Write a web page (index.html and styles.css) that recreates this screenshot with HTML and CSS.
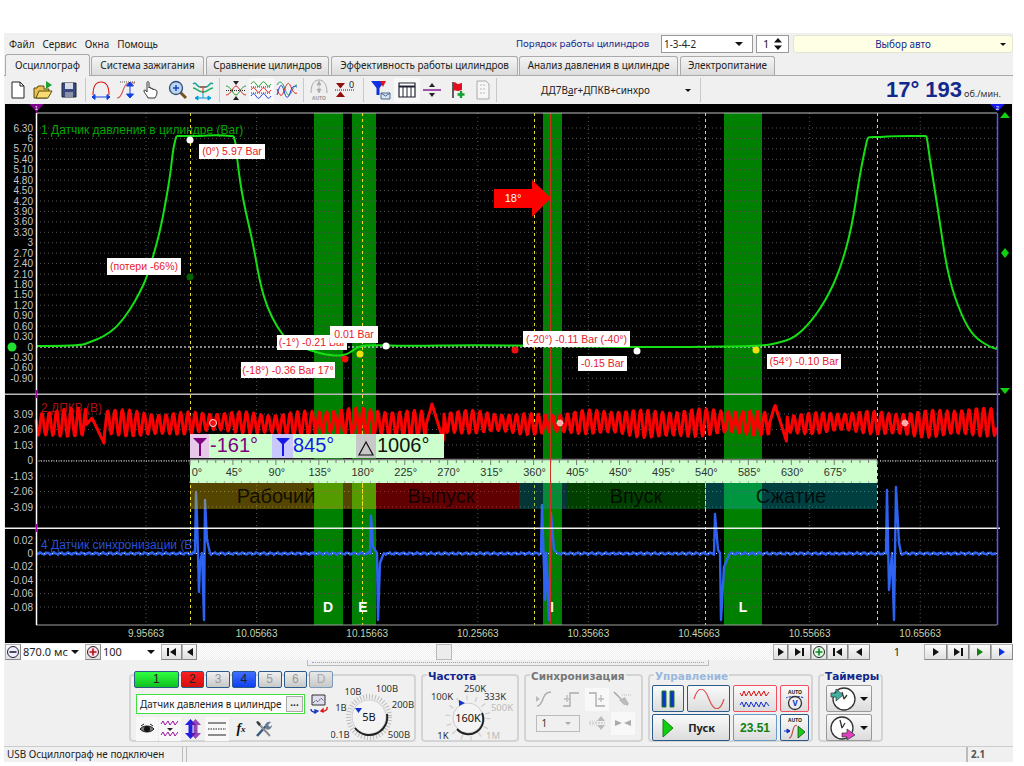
FILE: index.html
```html
<!DOCTYPE html>
<html>

<head>
  <meta charset="utf-8">
  <title>USB Осциллограф</title>
  <link rel="stylesheet" href="styles.css">
</head>

<body>
  <div class="app">
    <div class="menubar">
      <div class="menus"><span class="menu">Файл</span><span class="menu">Сервис</span><span class="menu">Окна</span><span class="menu">Помощь</span></div>
      <span class="order-label">Порядок работы цилиндров</span>
      <div class="combo order-combo"><span>1-3-4-2</span><i class="arrow"></i></div>
      <div class="combo spin"><span>1</span><svg width="10" height="14" viewBox="0 0 10 14"><path d="M5 1l4 4.500H1zM5 13l4-4.500H1z" fill="#111"/></svg></div>
      <div class="combo auto-combo"><span>Выбор авто</span><i class="arrow small"></i></div>
    </div>

    <div class="tabs">
      <div class="tab active">Осциллограф</div>
      <div class="tab t2">Система зажигания</div>
      <div class="tab t3">Сравнение цилиндров</div>
      <div class="tab t4">Эффективность работы цилиндров</div>
      <div class="tab t5">Анализ давления в цилиндре</div>
      <div class="tab t6">Электропитание</div>
    </div>

    <div class="toolbar">
      <span class="tool"><svg width="20" height="20" viewBox="0 0 20 20"><path d="M4 2h8l4 4v12H4z" fill="#fff" stroke="#222"/><path d="M12 2v4h4" fill="none" stroke="#222"/></svg></span>
      <span class="tool"><svg width="20" height="20" viewBox="0 0 20 20"><path d="M1 18V8h3l1-2h6v3h5l-2 9z" fill="#e8c050" stroke="#5a4a10"/><path d="M3 18l3-7h13l-4 7z" fill="#f6dc70" stroke="#5a4a10"/><path d="M13 1l6 4-6 4z" fill="#20a030"/></svg></span>
      <span class="tool"><svg width="20" height="20" viewBox="0 0 20 20"><path d="M3 3h14v14H3z" fill="#3a4a80" stroke="#223"/><path d="M6 3h8v6H6z" fill="#d8dce8"/><path d="M6 12h8v5H6z" fill="#8a90a8"/></svg></span>
      <i class="sep"></i>
      <span class="tool"><svg width="22" height="22" viewBox="0 0 22 22"><path d="M3 16C3 4 8 3 11 3s8 1 8 13" fill="none" stroke="#e01010" stroke-width="1.100"/><path d="M2 18h18M2 18l3-2.500v5zM20 18l-3-2.500v5z" fill="#1040e0" stroke="#1040e0"/></svg></span>
      <span class="tool"><svg width="22" height="22" viewBox="0 0 22 22"><path d="M1 19c7 0 5-15 12-15h6" fill="none" stroke="#e05050" stroke-width="1.100"/><path d="M4 3h16" stroke="#555" stroke-dasharray="1 1"/><path d="M14 4v14M14 3l-3.500 4h7zM14 19l-3.500-4h7z" fill="#1040e0" stroke="#1040e0"/></svg></span>
      <span class="tool"><svg width="20" height="20" viewBox="0 0 20 20"><path d="M6 18c-1-3-4-5-4-7s2-1 3 1V3c0-2 2-2 2 0v5c0-1 2-1 2 0v1c0-1 2-1 2 0v1c0-1 2-1 2 0 1 0 2 0 2 2 0 3-1 4-2 6z" fill="#fff" stroke="#222" stroke-width=".9"/></svg></span>
      <span class="tool"><svg width="20" height="20" viewBox="0 0 20 20"><path d="M11 11l7 7" stroke="#7a5020" stroke-width="3"/><circle cx="8" cy="8" r="6.500" fill="#bcd4f0" stroke="#30507a" stroke-width="1.300"/><path d="M5 8h6M8 5v6" stroke="#1040c0" stroke-width="1.400"/></svg></span>
      <span class="tool"><svg width="22" height="22" viewBox="0 0 22 22"><path d="M1 5c3-3 4 3 7 3h6c3 0 4-6 7-3" fill="none" stroke="#10a890" stroke-width="1.500"/><path d="M1 9c4 0 5 4 10 4s6-4 10-4" fill="none" stroke="#20b060" stroke-width="1.500"/><path d="M8 8h6M11 9v5" stroke="#e02020"/><path d="M3 19h16M3 19l3-2v4zM19 19l-3-2v4zM11 14v5" fill="#00a0e0" stroke="#00a0e0"/></svg></span>
      <i class="sep"></i>
      <span class="tool"><svg width="22" height="22" viewBox="0 0 22 22"><path d="M1 7c5 0 7 9 10 9s5-9 10-9" fill="none" stroke="#20a030"/><path d="M1 16c5 0 7-9 10-9s5 9 10 9" fill="none" stroke="#e02020"/><path d="M1 11.500h20" stroke="#222" stroke-dasharray="1 1"/><path d="M11 6L8 2h6zM11 17l-3 4h6z" fill="#222"/></svg></span>
      <span class="tool pressed"><svg width="22" height="22" viewBox="0 0 22 22"><path d="M1 5c2-3 3-3 5 0s3 3 5 0 3-3 5 0 3 3 5 0" fill="none" stroke="#20a030"/><path d="M1 11c2-3 3-3 5 0s3 3 5 0 3-3 5 0 3 3 5 0" fill="none" stroke="#e02020"/><path d="M1 17c2-3 3-3 5 0s3 3 5 0 3-3 5 0 3 3 5 0" fill="none" stroke="#2040e0"/><path d="M1 8h20M1 14h20" stroke="#333" stroke-dasharray="1 1"/></svg></span>
      <span class="tool"><svg width="22" height="22" viewBox="0 0 22 22"><path d="M1 6c3-6 6-2 8 4s4 8 6 4 3-8 6-8" fill="none" stroke="#20a060"/><path d="M1 10c3 8 5 8 7 2s4-10 6-6 4 10 7 8" fill="none" stroke="#e02020"/><path d="M1 16c3-12 5-12 7-4s4 8 6 2 3-8 7-6" fill="none" stroke="#2040e0"/></svg></span>
      <i class="sep"></i>
      <span class="tool"><svg width="22" height="24" viewBox="0 0 22 24"><path d="M3 15C3 5 7 2 11 2s8 3 8 13" fill="#eee" stroke="#aaa"/><path d="M11 4v11M11 3L9 7h4zM11 15l-2-4h4z" fill="#aaa" stroke="#aaa" stroke-width=".6"/><text x="11" y="21.500" class="ico-auto">AUTO</text></svg></span>
      <span class="tool"><svg width="24" height="22" viewBox="0 0 24 22"><path d="M3 4h9L7.500 9.500zM3 18h9l-4.500-5.500z" fill="#901010"/><path d="M2 11h20" stroke="#222" stroke-dasharray="1 1"/><text x="16" y="9" class="ico-zero">0</text></svg></span>
      <i class="sep wide"></i>
      <span class="tool"><svg width="22" height="22" viewBox="0 0 22 22"><path d="M1 2h14L9.500 9v7h-3V9z" fill="#1030e0"/><path d="M10 2h6l-3 6z" fill="#e01020"/><path d="M11 14h9v6h-9z" fill="#d8e4f4" stroke="#4a6a90"/><path d="M11 14l4.500 3 4.500-3" fill="none" stroke="#4a6a90"/></svg></span>
      <span class="tool pressed"><svg width="20" height="20" viewBox="0 0 20 20"><path d="M2 3h16v14H2z" fill="#fff" stroke="#223" stroke-width="1.200"/><path d="M2 6.500h16" stroke="#223" stroke-width="2"/><path d="M6 6v11M10 6v11M14 6v11" stroke="#223"/></svg></span>
      <span class="tool"><svg width="22" height="20" viewBox="0 0 22 20"><path d="M2 10h18" stroke="#802090" stroke-width="1.500"/><path d="M11 3l3 4H8zM11 17l3-4H8z" fill="#222"/></svg></span>
      <span class="tool"><svg width="20" height="20" viewBox="0 0 20 20"><path d="M5 2v16" stroke="#222" stroke-width="1.400"/><path d="M5 3c3-2 3 1 5 1s2-1 4-1v7c-2 0-2 1-4 1s-2-1-5 0z" fill="#e01020"/><path d="M13 11v7M9.500 14.500h7" stroke="#10a030" stroke-width="2.400"/></svg></span>
      <span class="tool"><svg width="20" height="20" viewBox="0 0 20 20"><path d="M4 1h9l3 3v15H4z" fill="#f6f6f6" stroke="#aaa"/><path d="M7 5h6M7 9h6M7 13h6" stroke="#bbb" stroke-dasharray="2 1"/></svg></span>
      <i class="sep last"></i>
      <div class="preset"><span>ДД7B<u>a</u>r+ДПКВ+синхро</span><i class="arrow small"></i></div>
      <i class="sep last"></i>
      <div class="rpm"><b>17° 193</b><small>об./мин.</small></div>
    </div>

    <svg id="scope" class="scope" width="1007" height="539" viewBox="5 104 1007 539"></svg>

    <div class="scrollrow">
      <span class="navbtn round"><svg width="14" height="14" viewBox="0 0 14 14"><circle cx="7" cy="7" r="5.500" fill="#eef" stroke="#223"/><path d="M3.500 7h7" stroke="#223" stroke-width="1.600"/></svg></span>
      <div class="mini-combo w63"><span>870.0 мс</span><i class="arrow"></i></div>
      <span class="navbtn round"><svg width="14" height="14" viewBox="0 0 14 14"><circle cx="7" cy="7" r="5.500" fill="#fde" stroke="#222"/><path d="M3.500 7h7M7 3.500v7" stroke="#b01010" stroke-width="1.600"/></svg></span>
      <div class="mini-combo w58"><span>100</span><i class="arrow"></i></div>
      <span class="navbtn w21"><i class="bar"></i><i class="tri-l"></i></span>
      <span class="navbtn w15"><i class="tri-l"></i></span>
      <div class="track"><i class="thumb"></i></div>
      <span class="navbtn w15"><i class="tri-r"></i></span>
      <span class="navbtn w23"><i class="tri-r"></i><i class="bar"></i></span>
      <span class="navbtn round"><svg width="14" height="14" viewBox="0 0 14 14"><circle cx="7" cy="7" r="5.500" fill="#dfd" stroke="#222"/><path d="M3.500 7h7M7 3.500v7" stroke="#108030" stroke-width="1.600"/></svg></span>
      <span class="navbtn w21"><i class="bar"></i><i class="tri-l"></i></span>
      <span class="navbtn w22"><i class="tri-l"></i></span>
      <span class="pagenum">1</span>
      <span class="navbtn w23"><i class="tri-r"></i></span>
      <span class="navbtn w22"><i class="tri-r"></i><i class="bar"></i></span>
      <span class="navbtn w22"><i class="tri-r green"></i></span>
      <span class="navbtn w22"><i class="tri-r blue"></i></span>
    </div>

    <div class="slider"><i class="slider-dots"></i></div>

    <div class="panels">
      <div class="channels">
        <div class="ch-left">
          <div class="ch-buttons">
            <span class="ch w45 on-green">1</span><span class="ch on-red">2</span><span class="ch off">3</span><span class="ch on-blue">4</span><span class="ch off">5</span><span class="ch off">6</span><span class="ch off-d">D</span>
          </div>
          <div class="ch-name">
            <div class="name-box"><span>Датчик давления в цилиндре</span><b class="dots">...</b></div>
            <svg width="20" height="20" viewBox="0 0 20 20"><path d="M3 1h13v10H3z" fill="#dde" stroke="#333"/><path d="M4 9l3-3 2 2 3-4 3 3" fill="none" stroke="#333" stroke-dasharray="1 1"/><path d="M2 15c0 3 4 4 7 2M9 17l-3-1v3z" fill="none" stroke="#1030c0" stroke-width="1.300"/><path d="M18 13c1 3-3 5-6 4M12 17l2-2v3z" fill="none" stroke="#e01010" stroke-width="1.300"/></svg>
          </div>
          <div class="ch-tools">
            <span class="tool pressed w22"><svg width="18" height="14" viewBox="0 0 18 14"><path d="M2 7c3-4 11-4 14 0-3 4-11 4-14 0z" fill="#777" stroke="#222"/><circle cx="9" cy="7" r="3" fill="#111"/><path d="M3 4l3-2M15 4l-3-2" stroke="#222"/></svg></span>
            <span class="tool pressed w22"><svg width="20" height="20" viewBox="0 0 20 20"><path d="M1 5l2-3 2 4 3-4 2 4 3-4 2 4 3-4" fill="none" stroke="#a010a0"/><path d="M7 9h6l-3 3z" fill="#222"/><path d="M1 16l2-3 2 4 3-4 2 4 3-4 2 4 3-4" fill="none" stroke="#a010a0"/></svg></span>
            <span class="tool w22"><svg width="18" height="22" viewBox="0 0 18 22"><path d="M6.500 1L1 7h3.500v8H1l5.500 6 5.500-6H8.500V7H12z" fill="#2020e0"/><path d="M11.500 1L6 7h3.500v8H6l5.500 6 5.500-6h-3.500V7H17z" fill="#7a10a0" opacity=".75"/></svg></span>
            <span class="tool pressed w24"><svg width="20" height="16" viewBox="0 0 20 16"><path d="M1 2h18M1 14h18" stroke="#222"/><path d="M1 8h18" stroke="#222" stroke-dasharray="1.500 1"/></svg></span>
            <span class="tool fx w22">f<sub>x</sub></span>
            <span class="tool w22"><svg width="18" height="18" viewBox="0 0 18 18"><path d="M2 16l9-10" stroke="#3a5a80" stroke-width="2.600"/><path d="M3 3l12 13" stroke="#8a8a90" stroke-width="2"/><path d="M10 6c0-3 3-5 6-4l-3 3 2 2 2-2c0 3-3 6-6 4z" fill="#6a7a90"/><path d="M1 2l2-1 3 3-2 2z" fill="#3a3a3a"/></svg></span>
          </div>
        </div>
        <svg class="knob-svg" width="84" height="66" viewBox="331 676 84 66">
          <circle cx="369" cy="717" r="20.500" class="knob-ticks"/>
          <circle cx="369" cy="717" r="17" class="knob-dial"/>
          <path d="M355 728a18 18 0 0 0 32-14" class="knob-edge"/>
          <path d="M355 708h7l-3.500 5z" fill="#1030d0"/>
          <text x="369" y="721" class="knob-mid">5В</text>
          <text x="353" y="695" class="knob-label">10В</text><text x="387" y="692" class="knob-label">100В</text>
          <text x="341" y="711" class="knob-label">1В</text><text x="403" y="708" class="knob-label">200В</text>
          <text x="340" y="738" class="knob-label">0.1В</text><text x="399" y="738" class="knob-label">500В</text>
        </svg>
      </div>

      <fieldset class="group freq">
        <legend class="navy">Частота</legend>
        <svg width="92" height="62" viewBox="423 680 92 62">
          <circle cx="468" cy="717" r="20" class="knob-ticks wide"/>
          <circle cx="468" cy="717" r="15" class="knob-dial"/>
          <path d="M457 728a15 15 0 0 0 25-16" class="knob-edge"/>
          <path d="M459 699l6 3-6 3z" fill="#1030d0"/>
          <text x="468" y="721" class="knob-mid">160K</text>
          <text x="442" y="699" class="knob-label">100K</text><text x="475" y="691" class="knob-label">250K</text>
          <text x="495" y="699" class="knob-label">333K</text><text x="502" y="710" class="knob-label dim">500K</text>
          <text x="443" y="738" class="knob-label">1K</text><text x="493" y="738" class="knob-label dim">1M</text>
        </svg>
      </fieldset>

      <fieldset class="group sync">
        <legend class="gray">Синхронизация</legend>
        <div class="sync-grid">
          <span class="sicon"><svg width="20" height="20" viewBox="0 0 20 20"><path d="M2 17c7 0 4-14 14-14" fill="none" stroke="#aaa" stroke-width="1.400"/><path d="M1 7l4 3-4 3z" fill="#bbb"/></svg></span>
          <span class="sicon"><svg width="20" height="20" viewBox="0 0 20 20"><path d="M2 17h7V4h9" fill="none" stroke="#aaa" stroke-width="1.300"/><path d="M3 10h6M6 6v7" stroke="#bbb" stroke-width="1.300"/></svg></span>
          <span class="sicon lit"><svg width="20" height="20" viewBox="0 0 20 20"><path d="M2 4h7v13h9" fill="none" stroke="#aaa" stroke-width="1.300"/><path d="M11 10h6M14 6v7" stroke="#bbb" stroke-width="1.300"/></svg></span>
          <span class="sicon"><svg width="20" height="20" viewBox="0 0 20 20"><path d="M1 3l5 5c3 3 5 7 9 8" fill="none" stroke="#aaa" stroke-width="1.600"/><path d="M9 6h10" stroke="#bbb" stroke-dasharray="1 1"/><path d="M6 11l6-3 4 7-5 1z" fill="#bbb"/></svg></span>
          <div class="combo sync-combo"><span>1</span><i class="arrow small dim"></i></div>
          <span class="sicon"><svg width="20" height="20" viewBox="0 0 20 20"><path d="M14 3l4 5h-8zM14 17l4-5h-8z" fill="#bbb"/><path d="M2 10h16" stroke="#bbb" stroke-dasharray="2 1"/><path d="M3 8h7M3 12h7" stroke="#ccc" stroke-dasharray="1 1"/></svg></span>
          <span class="sicon lit"><svg width="20" height="14" viewBox="0 0 20 14"><path d="M2 4l7 3-7 3zM18 4l-7 3 7 3z" fill="#aaa"/></svg></span>
        </div>
      </fieldset>

      <fieldset class="group control">
        <legend class="pale">Управление</legend>
        <div class="control-grid">
          <span class="btn"><svg width="16" height="18" viewBox="0 0 16 18"><path d="M2 1h4v16H2zM10 1h4v16h-4z" fill="#1030d0" stroke="#108020"/></svg></span>
          <span class="btn"><svg width="32" height="20" viewBox="0 0 32 20"><path d="M1 10C5-3 11-3 16 10s11 13 15 0" fill="none" stroke="#e05050" stroke-width="1.200"/></svg></span>
          <span class="btn red"><svg width="34" height="22" viewBox="0 0 34 22"><path d="M2 5l2 3 2-5 2 5 3-5 2 5 3-5 2 5 3-5 2 5 3-5 2 5 3-4" fill="none" stroke="#e01010"/><path d="M2 17l2-3 2 5 2-5 3 5 2-5 3 5 2-5 3 5 2-5 3 5 2-5 3 4" fill="none" stroke="#1030d0"/></svg></span>
          <span class="btn red"><svg width="22" height="24" viewBox="0 0 22 24"><text x="11" y="7" class="ico-auto dark">AUTO</text><path d="M2 11c3-2 15-2 18 0" fill="none" stroke="#1030d0" stroke-dasharray="2 1"/><circle cx="11" cy="16" r="6.500" fill="#eee" stroke="#333" stroke-width="1.300"/><text x="11" y="19" class="ico-v">V</text></svg></span>
          <span class="btn start"><svg width="12" height="20" viewBox="0 0 12 20"><path d="M1 1l10 9-10 9z" fill="#10d010" stroke="#108010"/></svg><b>Пуск</b></span>
          <span class="btn value">23.51</span>
          <span class="btn"><svg width="24" height="24" viewBox="0 0 24 24"><text x="12" y="6" class="ico-auto dark">AUTO</text><path d="M1 15h6M7 15l-3-2v4z" stroke="#1030d0" fill="#1030d0"/><path d="M6 22c5 0 2-13 8-13" fill="none" stroke="#c05050" stroke-width="1.200"/><path d="M15 10l7 6-7 6z" fill="#10d010" stroke="#222" stroke-width=".7"/></svg></span>
        </div>
      </fieldset>

      <fieldset class="group timers">
        <legend class="navy">Таймеры</legend>
        <div class="timer-stack">
          <span class="btn timer"><svg width="26" height="26" viewBox="0 0 26 26"><circle cx="14" cy="13" r="11" fill="#fff" stroke="#333" stroke-width="1.300"/><path d="M14 13L12 6M14 13l3-4" stroke="#333" stroke-width="1.300"/><path d="M1 7h5V3l7 6-7 6v-4H1z" fill="#40b0a0" stroke="#333" stroke-width=".7"/></svg><i class="arrow"></i></span>
          <span class="btn timer"><svg width="26" height="26" viewBox="0 0 26 26"><circle cx="12" cy="13" r="11" fill="#fff" stroke="#333" stroke-width="1.300"/><path d="M12 13L10 5M12 13l3-5" stroke="#333" stroke-width="1.300"/><path d="M12 18h5v-4l8 6-8 5v-3h-5z" fill="#e040c0" stroke="#333" stroke-width=".7"/></svg><i class="arrow"></i></span>
        </div>
      </fieldset>
    </div>

    <div class="statusbar">
      <div class="cell first">USB Осциллограф не подключен</div>
      <div class="cell grow"></div>
      <div class="cell ver">2.1</div>
    </div>
  </div>
  <script src="chart.js"></script>
</body>

</html>
```

FILE: styles.css
```css
body {
  margin: 0;
  background: white;
}

.app {
  margin: 33px 0 0 4px;
  width: 1009px;
  height: 729px;
  background: #f0f0f0;
  font-family: "Noto Sans", sans-serif;
  font-size: 9.900px;
  color: #222;
  overflow: hidden;
}

.menubar {
  height: 21px;
  display: flex;
  align-items: center;
  white-space: nowrap;
}

.menus {
  width: 512px;
  flex: none;
  padding-left: 5px;
  box-sizing: border-box;
}

.menu {
  margin-right: 8px;
}

.order-label {
  color: #12288c;
  width: 145px;
  flex: none;
  font-size: 9.700px;
}

.combo {
  background: white;
  border: 1px solid #999;
  height: 18px;
  box-sizing: border-box;
  display: flex;
  align-items: center;
  position: relative;
  flex: none;
}

.order-combo {
  width: 92px;
  padding-left: 2px;
  justify-content: space-between;
  padding-right: 9px;
}

.spin {
  width: 33px;
  margin-left: 3px;
  padding: 0 5px 0 6px;
  justify-content: space-between;
  font-size: 11px;
}

.auto-combo {
  width: 220px;
  margin-left: 4px;
  background: #ffffe6;
  border-color: #e4e4d0;
  border-radius: 3px;
  justify-content: center;
  color: #12288c;
}

.auto-combo .arrow {
  position: absolute;
  right: 6px;
  top: 7px;
}

.arrow {
  display: inline-block;
  border-left: 4px solid transparent;
  border-right: 4px solid transparent;
  border-top: 4px solid #111;
}

.arrow.small {
  border-left-width: 3px;
  border-right-width: 3px;
  border-top-width: 3px;
}

.arrow.dim {
  border-top-color: #aaa;
}

.tabs {
  height: 22px;
  display: flex;
  align-items: flex-end;
  padding-left: 1px;
  border-bottom: 1px solid #aaa;
  box-sizing: border-box;
}

.tab {
  height: 19px;
  line-height: 17px;
  box-sizing: border-box;
  border: 1px solid #aaa;
  border-bottom: none;
  border-radius: 3px 3px 0 0;
  margin-right: 2px;
  text-align: center;
  background: linear-gradient(#f4f4f4, #dcdcdc);
  white-space: nowrap;
  flex: none;
}

.tab.active {
  height: 22px;
  width: 85px;
  margin-right: 1px;
  background: #f0f0f0;
  margin-bottom: -1px;
  line-height: 20px;
}

.t2 { width: 113px; }
.t3 { width: 123px; }
.t4 { width: 187px; margin-right: 1px; }
.t5 { width: 159px; }
.t6 { width: 95px; }

.toolbar {
  height: 28px;
  display: flex;
  align-items: center;
  padding-left: 1px;
  box-sizing: border-box;
}

.tool {
  width: 25.500px;
  height: 24px;
  display: flex;
  align-items: center;
  justify-content: center;
  flex: none;
}

.tool.pressed {
  background: #f8f8f8;
}

.sep {
  width: 1px;
  height: 24px;
  background: #c8c8c8;
  flex: none;
  margin: 0 3px;
}

.sep.wide {
  margin: 0 5px;
}

.sep.last {
  margin: 0;
}

.ico-auto {
  font-size: 5px;
  text-anchor: middle;
  fill: #999;
  font-weight: bold;
}

.ico-auto.dark {
  fill: #222;
}

.ico-zero {
  font-size: 9px;
  fill: #222;
}

.ico-v {
  font-size: 8px;
  text-anchor: middle;
  fill: #1030d0;
  font-weight: bold;
}

.preset {
  width: 203px;
  display: flex;
  align-items: center;
  justify-content: space-between;
  padding: 0 9px 0 44px;
  box-sizing: border-box;
  flex: none;
}

.rpm {
  flex: 1;
  text-align: right;
  padding-right: 12px;
  color: #12288c;
  white-space: nowrap;
}

.rpm b {
  font-family: "Liberation Sans", sans-serif;
  font-size: 22px;
}

.rpm small {
  font-size: 9px;
  color: #333;
  margin-left: 2px;
}

.scope {
  display: block;
  margin-left: 1px;
  background: black;
  font-family: "Liberation Sans", sans-serif;
}

.tick-y {
  fill: #c8c8c8;
  font-size: 10px;
  text-anchor: end;
}

.tick-x {
  fill: #c4d4b0;
  font-size: 10px;
  text-anchor: middle;
}

.grid {
  stroke: #555;
  stroke-dasharray: 1 3;
}

.trace {
  fill: none;
  stroke-linejoin: round;
}

.tag-text {
  fill: #e8202a;
  font-size: 10.500px;
  text-anchor: middle;
}

.ch-title {
  font-size: 12px;
}

.info-text {
  font-size: 20px;
}

.ruler-text {
  font-size: 11px;
  fill: #333;
  text-anchor: middle;
}

.phase-text {
  font-size: 20px;
  fill: black;
  fill-opacity: .8;
  text-anchor: middle;
}

.band-letter {
  font-size: 14px;
  font-weight: bold;
  fill: white;
  text-anchor: middle;
}

.arrow-text {
  font-size: 11px;
  fill: white;
  text-anchor: middle;
}

.scrollrow {
  height: 17px;
  display: flex;
  align-items: center;
  padding-left: 1px;
  box-sizing: border-box;
  white-space: nowrap;
}

.navbtn {
  height: 16px;
  box-sizing: border-box;
  border: 1px solid #b0b0b0;
  border-right-color: #888;
  border-bottom-color: #888;
  background: linear-gradient(#fafafa, #e0e0e0);
  display: flex;
  align-items: center;
  justify-content: center;
  gap: 1px;
  flex: none;
}

.round { width: 16px; }
.w15 { width: 15px; }
.w21 { width: 21px; }
.w22 { width: 22px; }
.w23 { width: 23px; }
.w24 { width: 24px; }
.w58 { width: 60px; }
.w63 { width: 64px; }

.tri-l, .tri-r {
  border-top: 4px solid transparent;
  border-bottom: 4px solid transparent;
}

.tri-l { border-right: 6px solid #111; }
.tri-r { border-left: 6px solid #111; }
.tri-r.green { border-left-color: #108010; }
.tri-r.blue { border-left-color: #1030e0; }

.bar {
  width: 2px;
  height: 8px;
  background: #111;
}

.mini-combo {
  height: 16px;
  background: white;
  display: flex;
  align-items: center;
  justify-content: space-between;
  padding: 0 6px 0 2px;
  box-sizing: border-box;
  font-size: 11px;
  flex: none;
}

.track {
  flex: 1;
  height: 16px;
  background: repeating-conic-gradient(#fff 0 25%, #eee 0 50%) 0 0 / 2px 2px;
  position: relative;
}

.thumb {
  position: absolute;
  left: 239px;
  top: 0;
  width: 16px;
  height: 16px;
  box-sizing: border-box;
  border: 1px solid #bbb;
  background: #ececec;
}

.pagenum {
  width: 54px;
  text-align: center;
  font-size: 11px;
  flex: none;
  background: #f0f0f0;
}

.slider {
  height: 6px;
  margin-left: 303px;
  width: 402px;
  box-sizing: border-box;
  border: 1px solid #bbb;
  border-top: none;
  display: flex;
  align-items: center;
  padding: 0 4px;
}

.slider-dots {
  flex: 1;
  border-top: 1px dotted #78a8e0;
}

.panels {
  height: 80px;
  display: flex;
  align-items: flex-start;
  gap: 5px;
  padding-left: 125px;
  box-sizing: border-box;
}

.channels {
  width: 287px;
  height: 68px;
  margin-top: 8px;
  box-sizing: border-box;
  border: 2px solid #d4d4d4;
  border-radius: 4px;
  display: flex;
  flex: none;
}

.ch-left {
  width: 202px;
  padding-left: 3px;
  box-sizing: border-box;
  flex: none;
}

.ch-buttons {
  display: flex;
  gap: 2px;
  margin-top: -5px;
  height: 17px;
}

.ch {
  width: 24px;
  box-sizing: border-box;
  border: 1px solid #2a5a8a;
  border-radius: 2px;
  text-align: center;
  font-size: 12px;
  line-height: 15px;
  font-family: "Liberation Sans", sans-serif;
}

.ch.w45 { width: 45px; }

.on-green { background: linear-gradient(#30ff40, #10c020); }
.on-red { background: linear-gradient(#ff2020, #d01010); }
.on-blue { background: linear-gradient(#4070ff, #1040f0); }
.off { background: linear-gradient(#f0f0f0, #c8c8c8); color: #999; }
.off-d { background: linear-gradient(#e8e8e8, #c8c8c8); color: #aaa; border-color: #7a9aba; }

.ch-name {
  display: flex;
  align-items: center;
  gap: 4px;
  margin: 6px 0 0 2px;
}

.name-box {
  width: 169px;
  height: 20px;
  box-sizing: border-box;
  border: 1px solid #40e040;
  background: white;
  display: flex;
  align-items: center;
  justify-content: space-between;
  padding: 0 1px 0 3px;
  white-space: nowrap;
}

.dots {
  width: 17px;
  height: 16px;
  text-align: center;
  line-height: 10px;
  background: #eee;
  border: 1px solid #aaa;
  box-sizing: border-box;
  flex: none;
}

.ch-tools {
  display: flex;
  gap: 1px;
  margin: 3px 0 0 2px;
}

.fx {
  font-family: "Liberation Serif", serif;
  font-style: italic;
  font-weight: bold;
  font-size: 14px;
  color: #111;
}

.fx sub {
  font-size: 9px;
}

.knob-svg {
  margin: 0 -1px 0 -2px;
  flex: none;
}

.knob-ticks {
  fill: none;
  stroke: #bbb;
  stroke-width: 5;
  stroke-dasharray: 1 2;
}

.knob-ticks.wide {
  stroke: #ccc;
  stroke-dasharray: 1.200 8;
}

.knob-dial {
  fill: #f4f4f4;
  stroke: #ccc;
}

.knob-edge {
  fill: none;
  stroke: #222;
  stroke-width: 2;
}

.knob-mid {
  font-size: 11px;
  text-anchor: middle;
  fill: #111;
}

.knob-label {
  font-size: 9.500px;
  text-anchor: middle;
  fill: #333;
}

.knob-label.dim {
  fill: #bbb;
}

.group {
  margin: 2px 0 0;
  padding: 1px 1px 0;
  height: 74px;
  box-sizing: border-box;
  border: 2px solid #d4d4d4;
  border-radius: 4px;
  flex: none;
  min-width: 0;
}

.group legend {
  font-family: "DejaVu Sans", sans-serif;
  font-weight: bold;
  font-size: 10.500px;
  line-height: 13px;
  padding: 0 1px;
  margin-left: 3px;
  position: relative;
  top: 2px;
}

.navy { color: #12288c; }
.gray { color: #777; }
.pale { color: #9ab8dc; }

.freq { width: 98px; }
.sync { width: 119px; }
.control { width: 165px; }
.timers { width: 65px; }

.freq svg {
  display: block;
  margin: -1px 0 0 -1px;
}

.sync-grid {
  display: grid;
  grid-template-columns: 26px 26px 26px 26px;
  grid-auto-rows: 24px;
  justify-content: center;
  align-items: center;
  justify-items: center;
  margin-top: 5px;
}

.sicon {
  width: 24px;
  height: 23px;
  display: flex;
  align-items: center;
  justify-content: center;
}

.sicon.lit {
  background: #f8f8f8;
}

.sync-combo {
  grid-column: span 2;
  width: 44px;
  height: 17px;
  background: #f0f0f0;
  border-color: #bbb;
  justify-content: space-between;
  padding: 0 8px 0 5px;
  color: #333;
}

.control-grid {
  display: grid;
  grid-template-columns: 32px 43px 44px 29px;
  grid-auto-rows: 27px;
  gap: 2px 3px;
  margin: 3px 0 0 1px;
}

.btn {
  box-sizing: border-box;
  border: 1px solid #2a5a8a;
  border-radius: 2px;
  background: linear-gradient(#fafafa, #dcdcdc);
  display: flex;
  align-items: center;
  justify-content: center;
  overflow: hidden;
}

.btn.red {
  border-color: #f05060;
}

.btn.start {
  grid-column: span 2;
  justify-content: space-between;
  padding: 0 14px 0 9px;
}

.btn.start b {
  font-size: 11px;
}

.btn.value {
  border-color: #6a9aca;
  color: #108010;
  font-weight: bold;
  font-size: 12px;
  font-family: "Liberation Sans", sans-serif;
}

.timer-stack {
  display: flex;
  flex-direction: column;
  gap: 2px;
  margin: 3px 0 0 5px;
}

.btn.timer {
  width: 46px;
  height: 27px;
  gap: 4px;
  border-color: #999;
}

.statusbar {
  height: 16px;
  display: flex;
  border-top: 1px solid #ccc;
  box-sizing: border-box;
}

.cell {
  border-right: 1px solid #bbb;
  line-height: 15px;
  padding-left: 3px;
  box-sizing: border-box;
  white-space: nowrap;
}

.first { width: 179px; }
.grow { flex: 1; margin-left: 3px; border-left: 1px solid #bbb; }
.ver { width: 46px; border: none; border-left: 1px solid #bbb; font-weight: bold; color: #555; }
```

FILE: chart.js
```js
var svg = document.getElementById("scope");
var NS = "http://www.w3.org/2000/svg";

function add(tag, attrs, text) {
  var el = document.createElementNS(NS, tag);
  for (var k in attrs) el.setAttribute(k, attrs[k]);
  if (text !== undefined) el.textContent = text;
  svg.appendChild(el);
  return el;
}

function rect(x, y, w, h, fill, opacity) {
  var a = { x: x, y: y, width: w, height: h, fill: fill };
  if (opacity) a["fill-opacity"] = opacity;
  return add("rect", a);
}

function line(x1, y1, x2, y2, stroke, extra) {
  var a = { x1: x1, y1: y1, x2: x2, y2: y2, stroke: stroke };
  for (var k in extra) a[k] = extra[k];
  return add("line", a);
}

function trace(points, color, width) {
  add("path", { d: "M" + points.join("L"), class: "trace", stroke: color, "stroke-width": width });
}

// same as trace but rounds the corners between the points
function smooth(points, color, width) {
  var d = "M" + points[0].join(",");
  for (var i = 1; i < points.length - 1; i++) {
    var mx = (points[i][0] + points[i + 1][0]) / 2;
    var my = (points[i][1] + points[i + 1][1]) / 2;
    d += "Q" + points[i].join(",") + " " + mx + "," + my;
  }
  d += "L" + points[points.length - 1].join(",");
  add("path", { d: d, class: "trace", stroke: color, "stroke-width": width });
}

// green cylinder bands
[[314, 29], [352, 24], [543, 19], [724, 38]].forEach(function (b) {
  rect(b[0], 113, b[1], 512, "#008000");
});

// dotted grid
var labels1 = ["6.30", "6", "5.70", "5.40", "5.10", "4.80", "4.50", "4.20", "3.90", "3.60", "3.30", "3", "2.70", "2.40", "2.10", "1.80", "1.50", "1.20", "0.90", "0.60", "0.30", "0", "-0.30", "-0.60", "-0.90"];
labels1.forEach(function (t, i) {
  var y = 128 + i * 10.43;
  line(36, y, 997, y, "#555", { class: "grid" });
  add("text", { x: 33, y: y + 3.5, class: "tick-y" }, t);
});
var labels2 = ["3.09", "2.06", "1.03", "0", "-1.03", "-2.06", "-3.09"];
labels2.forEach(function (t, i) {
  var y = 414 + i * 15.5;
  line(36, y, 997, y, "#555", { class: "grid" });
  add("text", { x: 33, y: y + 3.5, class: "tick-y" }, t);
});
var labels3 = ["0.02", "0", "-0.02", "-0.04", "-0.06", "-0.08"];
labels3.forEach(function (t, i) {
  var y = 540 + i * 13.4;
  line(36, y, 997, y, "#555", { class: "grid" });
  add("text", { x: 33, y: y + 3.5, class: "tick-y" }, t);
});
for (var g = 0; g < 8; g++) {
  var gx = 146 + g * 110.6;
  line(gx, 113, gx, 625, "#555", { class: "grid" });
  add("text", { x: gx, y: 637, class: "tick-x" }, (9.95663 + g * 0.1).toFixed(5));
}

// zero lines
line(36, 347, 997, 347, "#fff", { "stroke-dasharray": "2 2" });
line(36, 461, 190, 461, "#fff", { "stroke-dasharray": "1 1.500" });
line(880, 461, 997, 461, "#fff", { "stroke-dasharray": "1 1.500" });

// yellow markers
[190, 362, 534, 705, 877].forEach(function (x) {
  line(x + 0.5, 113, x + 0.5, 625, "#e8e020", { "stroke-dasharray": "3 3" });
});

// channel titles
add("text", { x: 41, y: 134, class: "ch-title", fill: "#00a800" }, "1 Датчик давления в цилиндре (Bar)");
add("text", { x: 41, y: 412, class: "ch-title", fill: "#b01010" }, "2 ДПКВ (В)");
add("text", { x: 41, y: 549, class: "ch-title", fill: "#2a50d8" }, "4 Датчик синхронизации (В)");

// pressure trace
smooth([
  [36, 346], [80, 346], [90, 342], [103, 337], [117, 327], [130, 310], [140, 292], [147, 277], [157, 243], [163, 217],
  [170, 177], [173, 150], [176, 137], [177, 136], [178, 136], [200, 136], [215, 135], [232, 136], [233, 136], [234, 137], [236, 145], [238, 167], [243, 200], [253, 243],
  [260, 283], [267, 307], [277, 327], [287, 340], [310, 351], [333, 356], [347, 355], [357, 347], [367, 345], [410, 346],
  [470, 345], [560, 346], [620, 347], [690, 347], [762, 346], [778, 343], [794, 338], [810, 323], [826, 300], [840, 270],
  [852, 227], [860, 173], [867, 140], [868, 138], [869, 137], [880, 137], [895, 136], [925, 136], [926, 136], [927, 138], [930, 160], [938, 210], [948, 277], [962, 317],
  [974, 337], [990, 347], [997, 349]
], "#14e014", 2);

// crank sensor trace
var crank = [];
for (var x = 36; x <= 996; x += 0.8) {
  var amp = 11 + 1.8 * Math.sin(x * 0.021) + 1.5 * Math.sin(x * 0.11);
  var mid = 423 + 1.2 * Math.sin(x * 0.05);
  var y = mid + amp * Math.sin(x * 2 * Math.PI / 7.3);
  // missing teeth on the crank wheel: top of the bump, then a slide down
  [[92, 418], [432, 404], [775, 405]].forEach(function (d) {
    var off = x - d[0];
    if (off > -6 && off < 0) y = 425 + (off + 6) * (d[1] - 425) / 6;
    if (off >= 0 && off < 12) y = d[1] + off * (443 - d[1]) / 12;
  });
  crank.push(x.toFixed(1) + "," + y.toFixed(1));
}
trace(crank, "#ff0000", 3);

// sync sensor trace
var spikes = {
  195: 553, 196: 492, 197: 517, 199: 592, 200: 563, 202: 553, 204: 620, 205: 500, 207: 540, 210: 553,
  371: 516, 373: 547, 377: 553, 378: 620, 380: 563, 383: 555,
  542: 505, 545: 600, 546: 553, 549: 620, 551: 513, 554: 550, 557: 553,
  715: 514, 718: 550, 720: 553, 721: 620, 724: 567, 729: 555,
  887: 490, 889: 590, 892: 553, 894: 620, 896: 487, 899: 543, 901: 553
};
var sync = [];
for (var sx = 36; sx <= 996; sx++) {
  var sy = spikes[sx];
  if (sy === undefined) {
    // skip the flat stretch right inside a spike group
    if ((sx > 195 && sx < 210) || (sx > 371 && sx < 383) || (sx > 542 && sx < 557) || (sx > 715 && sx < 729) || (sx > 887 && sx < 901)) continue;
    sy = 553.5 + 0.8 * Math.sin(sx * 0.9) + 0.6 * Math.sin(sx * 2.3);
  }
  sync.push(sx + "," + sy.toFixed(1));
}
trace(sync, "#2e62f0", 2.4);
line(36, 553.5, 997, 553.5, "#cfd8ff", { "stroke-dasharray": "1 7" });

// phase bands
rect(190, 483, 186, 26, "#ffd000", 0.33);
rect(376, 483, 143, 26, "#ff0000", 0.38);
rect(519, 483, 48, 26, "#10a0a0", 0.33);
rect(567, 483, 138, 26, "#00d000", 0.3);
rect(705, 483, 172, 26, "#00c0c0", 0.33);
add("text", { x: 276, y: 503, class: "phase-text" }, "Рабочий");
add("text", { x: 441, y: 503, class: "phase-text" }, "Выпуск");
add("text", { x: 636, y: 503, class: "phase-text" }, "Впуск");
add("text", { x: 791, y: 503, class: "phase-text" }, "Сжатие");

// degree info bar
rect(190, 434, 254, 24, "#ccffcc");
rect(190, 434, 19, 24, "#e8c8e8");
rect(272, 434, 21, 24, "#c8c8ff");
rect(356, 434, 20, 24, "#c8c8c8");
add("path", { d: "M193 438h14l-6 6v12h-2v-12z", fill: "#800080" });
add("path", { d: "M276 438h14l-6 6v12h-2v-12z", fill: "#1818e8" });
add("path", { d: "M366 442l7 13h-14z", fill: "none", stroke: "#111", "stroke-width": 1.2 });
add("text", { x: 210, y: 452, class: "info-text", fill: "#800080" }, "-161°");
add("text", { x: 293, y: 452, class: "info-text", fill: "#1818e8" }, "845°");
add("text", { x: 377, y: 452, class: "info-text", fill: "#111" }, "1006°");

// degree ruler
rect(190, 459, 687, 24, "#ccffcc");
line(190, 459.5, 877, 459.5, "#777", { "stroke-width": 1.5 });
for (var t = 0; t <= 80; t++) {
  var tx = 190 + t * 8.59;
  line(tx, 460, tx, t % 5 == 0 ? 465 : 463, "#777");
  line(tx, 483, tx, 481, "#aaa");
}
for (var d = 0; d < 16; d++) {
  var dx = d == 0 ? 197 : 191 + d * 42.95;
  add("text", { x: dx, y: 476, class: "ruler-text" }, (d * 45) + "°");
}
line(362.5, 483, 362.5, 509, "#e8e020", { "stroke-dasharray": "3 3" });
line(705.5, 483, 705.5, 509, "#e8e020", { "stroke-dasharray": "3 3" });

// band letters
add("text", { x: 328, y: 612, class: "band-letter" }, "D");
add("text", { x: 363, y: 612, class: "band-letter" }, "E");
add("text", { x: 552, y: 612, class: "band-letter" }, "I");
add("text", { x: 743, y: 612, class: "band-letter" }, "L");

// ignition line and advance arrow
line(550.5, 113, 550.5, 625, "#d03020");
add("path", { d: "M494 189h38v-9l19 18-19 19v-9h-38z", fill: "#ff0000" });
add("text", { x: 513, y: 202, class: "arrow-text" }, "18°");

// frame
rect(36, 112.5, 961, 1, "#c0c0c0");
rect(5, 393.5, 995, 1.5, "#b8b8b8");
rect(5, 527.5, 995, 1.5, "#f0f0f0");
rect(36, 624.5, 961, 1, "#a0a0a0");
line(36.5, 113, 36.5, 625, "#fff", { "stroke-width": 1.5 });
line(997.5, 113, 997.5, 625, "#5858f8", { "stroke-width": 1.5 });
[[104, 113], [390, 398], [524, 532]].forEach(function (s) {
  line(36.5, s[0], 36.5, s[1], "#a000a0", { "stroke-width": 1.5 });
});
add("path", { d: "M29 104h15l-7.500 7.500z", fill: "#800090" });
add("text", { x: 36.500, y: 110, "text-anchor": "middle", "font-size": 6, fill: "#fff" }, "1");
add("path", { d: "M990 104h15l-7.500 7.500z", fill: "#1818f0" });
add("text", { x: 997.500, y: 110, "text-anchor": "middle", "font-size": 6, fill: "#fff" }, "2");
add("path", { d: "M1005 112l5 6h-10z", fill: "#10d010" });
add("path", { d: "M1005 248l4 5-4 5-4-5z", fill: "#10d010" });
add("path", { d: "M1005 394l5-6h-10z", fill: "#10d010" });

// value tags
[
  [199, 144, 66, 15, "(0°) 5.97 Bar"],
  [107, 258, 74, 17, "(потери -66%)"],
  [277, 335, 70, 15, "(-1°) -0.21 Bar"],
  [330, 326, 48, 17, "0.01 Bar"],
  [241, 362, 94, 16, "(-18°) -0.36 Bar 17°"],
  [523, 331, 107, 16, "(-20°) -0.11 Bar (-40°)"],
  [578, 356, 49, 15, "-0.15 Bar"],
  [767, 354, 74, 15, "(54°) -0.10 Bar"]
].forEach(function (b) {
  rect(b[0], b[1], b[2], b[3], "#fff");
  add("text", { x: b[0] + b[2] / 2, y: b[1] + b[3] / 2 + 3.5, class: "tag-text" }, b[4]);
});

// value markers
[
  [190, 140, "#fff"], [190, 277, "#006400"], [345, 359, "#f01010"], [360, 354, "#f0e010"], [386, 346, "#fff"],
  [515, 350, "#f01010"], [637, 351, "#fff"], [756, 350, "#f0e010"], [12, 347, "#20e030"]
].forEach(function (p) {
  add("circle", { cx: p[0], cy: p[1], r: p[0] == 12 ? 4.5 : 3.5, fill: p[2] });
});
add("circle", { cx: 213, cy: 423, r: 3.5, fill: "#f01010", stroke: "#ffdddd", "stroke-width": 1 });
[560, 905].forEach(function (x) {
  add("circle", { cx: x, cy: 423, r: 3, fill: "#ffaaaa", stroke: "#fff", "stroke-dasharray": "1 1" });
});
```
